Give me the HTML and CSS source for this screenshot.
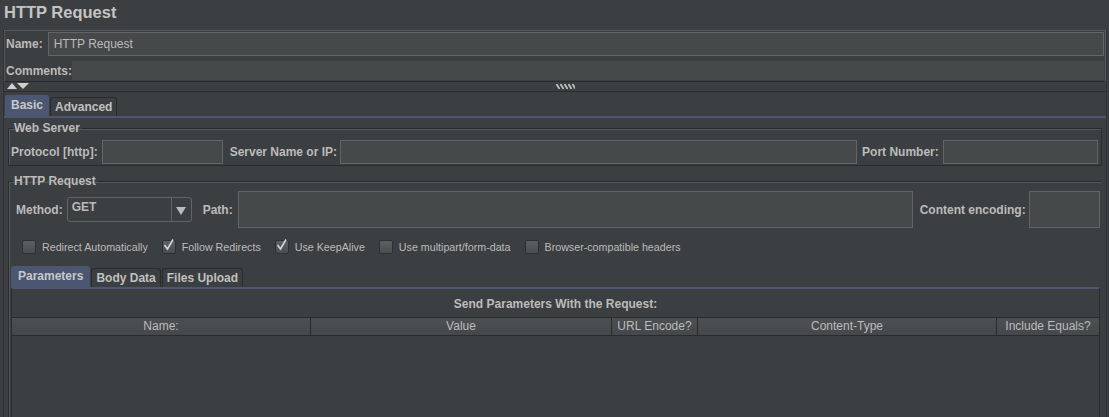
FILE: index.html
```html
<!DOCTYPE html>
<html>
<head>
<meta charset="utf-8">
<link rel="stylesheet" href="styles.css">
</head>
<body>
<div class="title">HTTP Request</div>
<div class="frame">
  <div class="namepanel">
    <div class="row name-row">
      <span class="lbl">Name:</span>
      <div class="field name-field">HTTP Request</div>
    </div>
    <div class="row comments-row">
      <span class="lbl">Comments:</span>
      <div class="comments-field"></div>
    </div>
  </div>
  <div class="splitter">
    <svg class="arrows" width="26" height="7" viewBox="0 0 26 7">
      <polygon points="0,6 5,0 10,6" fill="#cfcfcf"/>
      <polygon points="10,0 22,0 16,6" fill="#cfcfcf"/>
    </svg>
    <svg class="grip" width="19" height="5" viewBox="0 0 19 5">
      <defs>
        <pattern id="hatch" width="4" height="5" patternUnits="userSpaceOnUse">
          <path d="M0,0 L1.5,0 L4,4 L4,5 L2.5,5 L0,1 Z" fill="#bdbdbd"/>
        </pattern>
      </defs>
      <rect width="19" height="5" fill="url(#hatch)"/>
    </svg>
  </div>
  <div class="tabs">
    <div class="tab active">Basic</div>
    <div class="tab">Advanced</div>
  </div>
  <div class="tabbody">
    <fieldset class="group ws">
      <legend>Web Server</legend>
      <div class="row ws-row">
        <span class="lbl">Protocol [http]:</span>
        <div class="field f-proto"></div>
        <span class="lbl">Server Name or IP:</span>
        <div class="field f-server"></div>
        <span class="lbl">Port Number:</span>
        <div class="field f-port"></div>
      </div>
    </fieldset>
    <fieldset class="group hr">
      <legend>HTTP Request</legend>
      <div class="row hr-row">
        <span class="lbl">Method:</span>
        <div class="combo"><span class="combo-val">GET</span><span class="combo-btn"><svg width="10" height="9" viewBox="0 0 10 9"><polygon points="0,1 10,1 5,9" fill="#bbbbbb"/></svg></span></div>
        <span class="lbl l-path">Path:</span>
        <div class="field f-path"></div>
        <span class="lbl l-enc">Content encoding:</span>
        <div class="field f-enc"></div>
      </div>
      <div class="checks">
        <label class="chk"><span class="box"></span>Redirect Automatically</label>
        <label class="chk"><span class="box"><svg width="13" height="14" viewBox="0 0 13 14"><path d="M2.5,7 L5.5,11 L11,1.5" fill="none" stroke="#d4d4d4" stroke-width="1.6"/></svg></span>Follow Redirects</label>
        <label class="chk"><span class="box"><svg width="13" height="14" viewBox="0 0 13 14"><path d="M2.5,7 L5.5,11 L11,1.5" fill="none" stroke="#d4d4d4" stroke-width="1.6"/></svg></span>Use KeepAlive</label>
        <label class="chk"><span class="box"></span>Use multipart/form-data</label>
        <label class="chk"><span class="box"></span>Browser-compatible headers</label>
      </div>
      <div class="subtabs">
        <div class="tab active">Parameters</div>
        <div class="tab">Body Data</div>
        <div class="tab">Files Upload</div>
      </div>
      <div class="subbody">
        <div class="caption">Send Parameters With the Request:</div>
        <div class="thead">
          <div class="th">Name:</div>
          <div class="th">Value</div>
          <div class="th">URL Encode?</div>
          <div class="th">Content-Type</div>
          <div class="th">Include Equals?</div>
        </div>
      </div>
    </fieldset>
  </div>
</div>
</body>
</html>
```

FILE: styles.css
```css
* { box-sizing: border-box; }
html, body {
  margin: 0;
  padding: 0;
  background: #3c3f41;
  color: #bbbbbb;
  font-family: "Liberation Sans", Arial, sans-serif;
  font-size: 12px;
  overflow: hidden;
  height: 417px;
}
.title {
  font-size: 16.5px;
  font-weight: bold;
  height: 28px;
  padding: 3px 0 0 4px;
  color: #c4c4c4;
}
.frame {
  margin: 0 2px 0 3px;
  border-left: 1px solid #2f3133;
  border-right: 1px solid #2f3133;
  height: 389px;
}
.lbl {
  font-weight: bold;
  white-space: nowrap;
}
.row {
  display: flex;
  align-items: center;
}
.namepanel {
  margin: 2px 0 0 0;
  border: 1px solid #555759;
  border-right-color: #5e6062;
  border-bottom-color: #2b2b2b;
  height: 52px;
  padding: 1px 1px 0 1px;
}
.name-row {
  height: 24px;
  gap: 5px;
}
.field {
  background: #45494a;
  border: 1px solid #646464;
  height: 24px;
}
.name-field {
  flex: 1;
  padding: 4px 0 0 5px;
  color: #bbbbbb;
  font-size: 12px;
}
.comments-row {
  margin-top: 5px;
  height: 19px;
}
.comments-field {
  flex: 1;
  height: 19px;
  background: #45494a;
}
.splitter {
  height: 10px;
  border-bottom: 1px solid #2b2b2b;
  position: relative;
  display: flex;
  align-items: center;
}
.arrows { margin-left: 3px; }
.grip {
  position: absolute;
  left: 552px;
  top: 2px;
}
.tabs, .subtabs {
  display: flex;
  align-items: flex-end;
  padding-left: 1px;
  height: 24px;
}
.tab {
  font-weight: bold;
  padding: 0 4px;
  height: 19px;
  line-height: 18px;
  border: 1px solid #2b2b2b;
  border-bottom: none;
  border-radius: 3px 3px 0 0;
  background: #3c3f41;
  color: #c0c0c0;
  margin-right: 1px;
}
.tab.active {
  height: 21px;
  line-height: 18px;
  background: #4b5671;
  border-color: #4b5671;
  padding: 0 5px;
  color: #c8c8c8;
}
.tabbody {
  border-top: 2px solid #4b5671;
  height: 300px;
  padding: 3px 4px 0 4px;
}
.group {
  margin: 0;
  border: 1px solid #2b2b2b;
  box-shadow: inset 1px 1px 0 #55585a;
  padding: 0;
  min-width: 0;
}
.group legend {
  font-weight: bold;
  padding: 0 2px 0 1px;
  margin-left: 4px;
  font-size: 12px;
  line-height: 14px;
}
.ws {
  height: 45px;
}
.ws-row {
  padding: 5px 0 0 2px;
}
.f-proto { width: 121px; margin: 0 7px 0 4px; }
.f-server { width: 517px; margin: 0 5px 0 3px; }
.f-port { width: 155px; margin-left: 4px; }
.hr {
  margin-top: 8px;
  height: 260px;
  border-right: none;
  border-bottom: none;
}
.hr-row {
  padding: 3px 0 0 7px;
}
.combo {
  width: 125px;
  height: 25px;
  display: flex;
  border: 1px solid #646464;
  border-radius: 3px;
  background: #3c3f41;
  margin: 0 11px 0 4px;
}
.combo-val {
  flex: 1;
  padding: 2px 0 0 4px;
  font-weight: bold;
}
.combo-btn {
  width: 20px;
  border-left: 1px solid #646464;
  display: flex;
  align-items: center;
  justify-content: center;
  padding-top: 2px;
}
.f-path { width: 675px; height: 37px; margin: 0 7px 0 5px; }
.f-enc { width: 71px; height: 37px; margin-left: 3px; }
.checks {
  display: flex;
  align-items: center;
  padding: 10px 0 0 13px;
  height: 27px;
}
.chk {
  display: flex;
  align-items: center;
  font-size: 10.7px;
  margin-right: 14px;
  color: #bbbbbb;
}
.box {
  width: 14px;
  height: 14px;
  border: 1px solid #2e3032;
  border-radius: 2px;
  background: linear-gradient(#5d6063, #4b4e51);
  margin-right: 6px;
  display: inline-flex;
  position: relative;
}
.box svg { position: absolute; left: -1px; top: -3px; }
.subtabs {
  margin-top: 8px;
  padding-left: 2px;
}
.subtabs .tab.active { padding: 0 6px; }
.subtabs .tab { padding: 0 4px; }
.subbody {
  margin-left: 2px;
  margin-right: 2px;
  border-top: 2px solid #4b5671;
  border-left: 1px solid #2b2b2b;
  border-right: 1px solid #2b2b2b;
  height: 140px;
}
.caption {
  text-align: center;
  font-weight: bold;
  padding-top: 8px;
  height: 28px;
}
.thead {
  display: grid;
  grid-template-columns: 299px 301px 86px 299px 1fr;
  height: 19px;
  border-top: 1px solid #2b2b2b;
  border-bottom: 1px solid #2b2b2b;
  background: linear-gradient(#4d5053, #45484b);
}
.th {
  text-align: center;
  font-size: 12px;
  line-height: 17px;
  border-right: 1px solid #2b2b2b;
  color: #bbbbbb;
  white-space: nowrap;
  overflow: hidden;
}
.th:last-child { border-right: none; }
```
